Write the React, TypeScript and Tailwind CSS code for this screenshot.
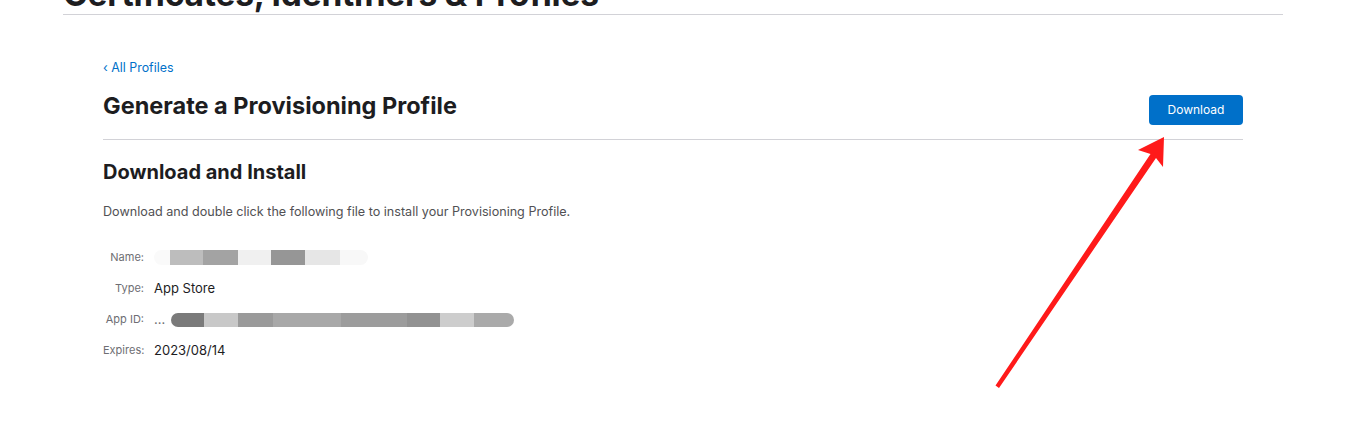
import React from "react";

const font = { fontFamily: "Inter, 'Liberation Sans', sans-serif" };

function Blur({ parts, h }: { parts: [number, string][]; h: string }) {
  return (
    <div className={`flex ${h} items-center rounded-full overflow-hidden`}>
      {parts.map(([w, c], i) => (
        <div key={i} className="h-full" style={{ width: w, background: c }} />
      ))}
    </div>
  );
}

function Row({ label, children }: { label: string; children: React.ReactNode }) {
  return (
    <div className="flex items-center h-[31px]">
      <div className="w-[44px] text-right text-[11px] text-[#6e6e73] pr-[3px]">{label}</div>
      <div className="pl-[7px] text-[13px] text-[#1d1d1f] flex items-center">{children}</div>
    </div>
  );
}

export default function App() {
  return (
    <div className="relative w-[1360px] h-[430px] bg-white overflow-hidden" style={font}>
      <div className="ml-[63px] w-[1220px]">
        <div className="h-[15px] border-b border-[#d2d2d7] overflow-hidden relative">
          <h1 className="absolute left-0 top-[-22px] text-[33.5px] font-bold text-[#1d1d1f] tracking-[-0.2px] whitespace-nowrap leading-[32px]">
            Certificates, Identifiers &amp; Profiles
          </h1>
        </div>

        <div className="px-[40px]">
          <div className="mt-[45px] text-[12.4px] text-[#0070c9] leading-[16px]">‹ All Profiles</div>
          <div className="mt-[13px] flex items-center justify-between pb-[14px] border-b border-[#d2d2d7]">
            <h2 className="text-[23.5px] font-bold text-[#1d1d1f] leading-[28px] pb-[3px]">Generate a Provisioning Profile</h2>
            <button className="bg-[#0070c9] text-white text-[12px] rounded-[4px] w-[94px] h-[30px] mt-[6px]">Download</button>
          </div>

          <h3 className="mt-[20px] text-[20px] font-bold text-[#1d1d1f] leading-[24px]">Download and Install</h3>
          <p className="mt-[20px] text-[12.6px] text-[#515154] leading-[16px]">
            Download and double click the following file to install your Provisioning Profile.
          </p>

          <div className="mt-[22px] flex flex-col">
            <Row label="Name:">
              <Blur
                h="h-[15px]"
                parts={[
                  [16, "#fafafa"],
                  [33, "#bdbdbd"],
                  [35, "#a3a3a3"],
                  [33, "#f0f0f0"],
                  [34, "#969696"],
                  [35, "#e6e6e6"],
                  [28, "#f8f8f8"],
                ]}
              />
            </Row>
            <Row label="Type:">App Store</Row>
            <Row label="App ID:">
              <span className="text-[#6e6e73] mr-[6px]">…</span>
              <Blur
                h="h-[14px]"
                parts={[
                  [33, "#7a7a7a"],
                  [34, "#c8c8c8"],
                  [35, "#9a9a9a"],
                  [68, "#a8a8a8"],
                  [66, "#9c9c9c"],
                  [33, "#929292"],
                  [34, "#cdcdcd"],
                  [40, "#aaaaaa"],
                ]}
              />
            </Row>
            <Row label="Expires:">2023/08/14</Row>
          </div>
        </div>
      </div>

      <svg className="absolute left-0 top-0 pointer-events-none" width="1360" height="430">
        <path d="M995.5 385.5 L1150.5 154 L1138 150 L1164 137 L1163 167 L1156 158 L999 388 Z" fill="#ff1a1a" strokeLinejoin="round" />
      </svg>
    </div>
  );
}
